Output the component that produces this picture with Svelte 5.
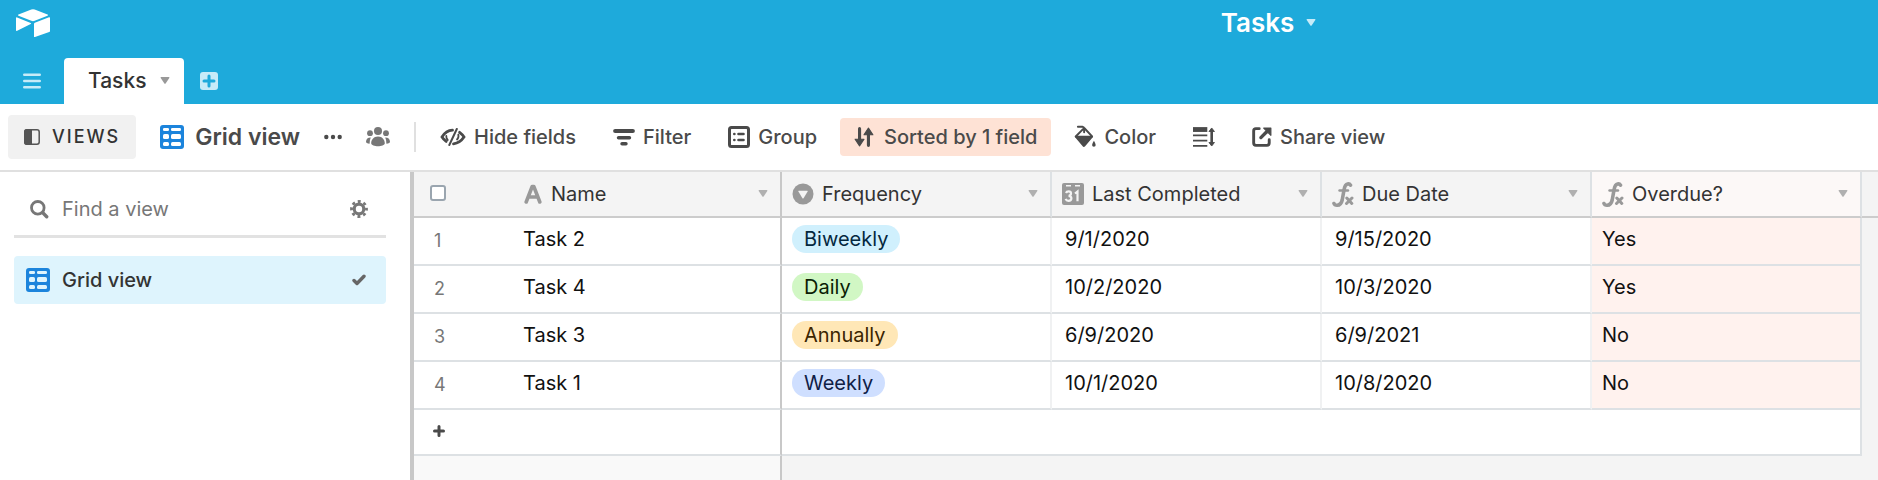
<script>
  let tableName = $state('Tasks');
  let viewSearch = $state('');
  let allSelected = $state(false);

  const views = [{ name: 'Grid view', active: true }];

  const columns = [
    { name: 'Name', icon: 'text', key: 'name' },
    { name: 'Frequency', icon: 'select', key: 'frequency' },
    { name: 'Last Completed', icon: 'date', key: 'last' },
    { name: 'Due Date', icon: 'formula', key: 'due' },
    { name: 'Overdue?', icon: 'formula', key: 'overdue' }
  ];

  const tasks = [
    { name: 'Task 2', frequency: 'Biweekly', last: '9/1/2020', due: '9/15/2020', overdue: 'Yes' },
    { name: 'Task 4', frequency: 'Daily', last: '10/2/2020', due: '10/3/2020', overdue: 'Yes' },
    { name: 'Task 3', frequency: 'Annually', last: '6/9/2020', due: '6/9/2021', overdue: 'No' },
    { name: 'Task 1', frequency: 'Weekly', last: '10/1/2020', due: '10/8/2020', overdue: 'No' }
  ];

  const filteredViews = $derived(
    views.filter(v => v.name.toLowerCase().includes(viewSearch.toLowerCase()))
  );
</script>

{#snippet caret()}
  <svg class="caret" width="10" height="8" viewBox="0 0 10 8"><path d="M1.2 0h7.6q1 0 .5 1L5.8 6.3q-.8 1-1.6 0L.7 1Q.2 0 1.2 0z" fill="currentColor" /></svg>
{/snippet}

{#snippet gridIcon(gap)}
  <svg width="24" height="24" viewBox="0 0 24 24">
    <rect width="24" height="24" rx="3" fill="#1c84dc" />
    <g fill={gap}>
      <rect x="3" y="3" width="6" height="3" rx="1.3" /><rect x="11" y="3" width="10" height="3" rx="1.3" />
      <rect x="3" y="9" width="6" height="5" rx="1.6" /><rect x="11" y="9" width="10" height="5" rx="1.6" />
      <rect x="3" y="17" width="6" height="4" rx="1.5" /><rect x="11" y="17" width="10" height="4" rx="1.5" />
    </g>
  </svg>
{/snippet}

{#snippet fieldIcon(type)}
  {#if type === 'text'}
    <svg width="19" height="20" viewBox="0 0 19 20" fill="none" stroke="currentColor" stroke-width="3.6" stroke-linecap="round" stroke-linejoin="round"><path d="M2.200 18 8.200 2.500h1.600L15.800 18M4.700 13h8.800" /></svg>
  {:else if type === 'select'}
    <svg width="22" height="22" viewBox="0 0 22 22"><circle cx="11" cy="11" r="10.5" fill="currentColor" /><path d="M6.8 7.8h8.4q.8 0 .4.8l-3.9 6.5q-.7 1-1.4 0L6.4 8.6q-.4-.8.4-.8z" fill="#f4f4f4" /></svg>
  {:else if type === 'date'}
    <svg width="22" height="22" viewBox="0 0 22 22">
      <rect width="22" height="22" rx="2" fill="currentColor" />
      <path d="M4 2.8h5M13 2.8h5" stroke="#f4f4f4" stroke-width="1.6" />
      <path d="M4 10q.6-1.6 2.6-1.6 2.4 0 2.4 2.2 0 2-2.4 2.2 2.8.2 2.8 2.5 0 2.5-2.9 2.5-2.2 0-2.9-1.9M13 10.5l2.5-2v9.7" fill="none" stroke="#f4f4f4" stroke-width="2.2" />
    </svg>
  {:else}
    <svg width="22" height="25" viewBox="0 0 22 25" fill="none" stroke="currentColor" stroke-linecap="round">
      <path d="M18.500 3.200Q17.500 1.500 15.500 2 13 2.500 12.200 7L10.200 18Q9 23.300 5 23.200 2.600 23.200 2 21.500" stroke-width="3.600" />
      <path d="M7.500 8.500h8.500" stroke-width="2.400" />
      <path d="m14.800 16 5 5.500M20 16l-5.500 5.500" stroke-width="3" />
    </svg>
  {/if}
{/snippet}

<div class="app">
  <header>
    <div class="title-bar">
      <a class="logo" href="#home" aria-label="Home">
        <svg width="34" height="28" viewBox="0 0 34 28" fill="#fff">
          <path d="M15.300.500Q17 -.2 18.700.5L31.500 5.500q1.200.6 0 1.200L18.700 11.800q-1.700.7-3.400 0L2.500 6.700q-1.200-.6 0-1.200z" />
          <path d="M18 14.900q0-.8.800-1.100L33 8.300q1-.3 1 .6v13q0 .9-.8 1.200L19 28q-1 .3-1-.6z" />
          <path d="M0 9.300q0-1.300 1.100-.9l13.600 5.500q1 .5 0 1L1.200 21.700Q0 22.300 0 21z" />
        </svg>
      </a>
      <button class="base-name">{tableName} {@render caret()}</button>
    </div>
    <nav class="tabs">
      <button class="menu" aria-label="All tables">
        <svg width="18" height="16" viewBox="0 0 18 16" stroke="currentColor" stroke-width="2.600" stroke-linecap="round"><path d="M1.300 1.800h15.400M1.300 8h15.400M1.300 14.200h15.400" /></svg>
      </button>
      <button class="tab">{tableName} {@render caret()}</button>
      <button class="add-table" aria-label="Add table">
        <svg width="18" height="18" viewBox="0 0 18 18"><rect width="18" height="18" rx="3" fill="#c7ebf8" /><path d="M9 4v10M4 9h10" stroke="#1eaadb" stroke-width="3" stroke-linecap="round" /></svg>
      </button>
    </nav>
  </header>

  <div class="toolbar">
    <button class="views-toggle">
      <svg width="16" height="16" viewBox="0 0 16 16"><rect x=".8" y=".8" width="14.400" height="14.400" rx="2.200" fill="none" stroke="#555" stroke-width="1.500" /><path d="M3 0h5v16H3q-3 0-3-3V3q0-3 3-3z" fill="#555" /></svg>
      <span>VIEWS</span>
    </button>
    <button class="view-name">{@render gridIcon('#fff')} Grid view</button>
    <button class="plain" aria-label="View options">
      <svg width="18" height="6" viewBox="0 0 18 6" fill="#4a4a4a"><circle cx="2.300" cy="3" r="2.200" /><circle cx="9" cy="3" r="2.200" /><circle cx="15.700" cy="3" r="2.200" /></svg>
    </button>
    <button class="plain" aria-label="Collaborators">
      <svg width="24" height="20" viewBox="0 0 24 20" fill="#777"><circle cx="12" cy="4" r="4" /><circle cx="4" cy="6.200" r="2.900" /><circle cx="20" cy="6.200" r="2.900" /><path d="M12 9.500c4.500 0 6.800 3.500 6.800 6.700 0 2-3.600 3-6.800 3s-6.800-1-6.800-3c0-3.200 2.300-6.700 6.800-6.700zM4.800 10.500Q3.500 13 3.600 16.800 0 16.500 0 14.800q.2-4.300 4.800-4.300zM19.200 10.500q1.300 2.500 1.200 6.300 3.600-.3 3.600-2-.2-4.300-4.800-4.300z" /></svg>
    </button>
    <div class="divider"></div>
    <div class="tools">
      <button class="tool">
        <svg width="26" height="18" viewBox="0 0 26 18" fill="none" stroke="currentColor" stroke-width="2.800" stroke-linecap="round"><path d="M12.500 2.200Q6 2.500 2 9q1.500 2.400 4.200 4.500" /><path d="M19.600 4.300Q22.300 6.300 24 9q-4 6-10.500 6.800" /><path d="m16.800 1-7.500 16" stroke-width="2" /><path d="M6.300 8q-.2 2.400 1.400 4M18.300 6.500q.8 3-1.300 5" stroke-width="1.800" /></svg>
        Hide fields
      </button>
      <button class="tool">
        <svg width="22" height="18" viewBox="0 0 22 18" stroke="currentColor" stroke-linecap="round"><path d="M2.200 3h17.600" stroke-width="4.200" /><path d="M5.500 9.700h11" stroke-width="3.400" /><path d="M9 15.800h4" stroke-width="3.400" /></svg>
        Filter
      </button>
      <button class="tool">
        <svg width="22" height="22" viewBox="0 0 22 22" fill="none" stroke="currentColor"><rect x="1.500" y="1.500" width="19" height="19" rx="2" stroke-width="3" /><path d="M6.300 8h.1M6.300 14h.1M10.500 8h5M10.500 14h5" stroke-width="2.600" stroke-linecap="round" /></svg>
        Group
      </button>
      <button class="tool sorted">
        <svg width="20" height="20" viewBox="0 0 18 18"><path d="M5 1.500V12M13 16.500V6" stroke="currentColor" stroke-width="2.800" stroke-linecap="round" /><path d="M1 11h8L5 17zM9 7h8l-4-6z" fill="currentColor" stroke="currentColor" stroke-linejoin="round" /></svg>
        Sorted by 1 field
      </button>
      <button class="tool">
        <svg width="22" height="24" viewBox="0 0 20 22" fill="none" stroke="currentColor" stroke-linejoin="round"><path d="M1.500 10.700h15l-7 8.300q-.6.600-1 0z" fill="currentColor" stroke-width="1.600" /><path d="M1.500 10.500 7.500 4.500l2-1.500 7 7.500" stroke-width="1.800" stroke-linecap="round" /><path d="M3.500 1.600h4.200q1.500.2 1.500 2v3" stroke-width="1.800" stroke-linecap="round" /><path d="M18.200 14.500q1.600 2.700 1.600 3.800a1.600 1.600 0 0 1-3.300 0q0-1.100 1.700-3.800z" fill="currentColor" stroke="none" /></svg>
        Color
      </button>
      <button class="tool" aria-label="Row height">
        <svg width="22" height="20" viewBox="0 0 20 18" stroke="currentColor"><path d="M0 2.200h13" stroke-width="4.400" /><path d="M0 7.500h13M0 12.200h13M0 17h13" stroke-width="1.600" /><path d="M17 3v12" stroke-width="2.400" /><path d="M14.500 4h5L17 .8zM14.500 14h5L17 17.200z" fill="currentColor" stroke-linejoin="round" stroke-width=".8" /></svg>
      </button>
      <button class="tool">
        <svg width="20" height="20" viewBox="0 0 18 18" fill="none" stroke="currentColor" stroke-width="2.600" stroke-linecap="round" stroke-linejoin="round"><path d="M6.500 1.500H3.500q-2 0-2 2v11q0 2 2 2h10q2 0 2-2v-3" /><path d="m8 9.500 5-5" stroke-width="3" /><path d="M10.500 1H17v6.500z" fill="currentColor" stroke-width="1" /></svg>
        Share view
      </button>
    </div>
  </div>

  <main>
    <aside>
      <div class="find">
        <label for="find-view" aria-label="Find a view">
          <svg width="19" height="19" viewBox="0 0 19 19" fill="none" stroke="#777"><circle cx="7.800" cy="7.800" r="6.300" stroke-width="2.800" /><path d="m12.800 12.800 3.900 3.900" stroke-width="3.400" stroke-linecap="round" /></svg>
        </label>
        <input id="find-view" type="text" placeholder="Find a view" bind:value={viewSearch} />
        <button class="plain" aria-label="View settings">
          <svg width="18" height="18" viewBox="0 0 18 18" fill="none" stroke="#777"><circle cx="9" cy="9" r="4.800" stroke-width="3.200" /><circle cx="9" cy="9" r="7.500" stroke-width="2.800" stroke-dasharray="2.945 2.945" stroke-dashoffset="1.470" /></svg>
        </button>
      </div>
      {#each filteredViews as view}
        <button class="view-item" class:active={view.active}>
          {@render gridIcon('#def4fd')}
          <span>{view.name}</span>
          <svg width="14" height="12" viewBox="0 0 14 12" fill="none" stroke="#666" stroke-width="3.400" stroke-linecap="round" stroke-linejoin="round"><path d="m2 6.500 3 3 7-7.200" /></svg>
        </button>
      {/each}
    </aside>

    <section class="grid">
      <table>
        <colgroup>
          <col class="col-number" />
          {#each columns as column}
            <col class="col-field" />
          {/each}
          <col />
        </colgroup>
        <thead>
          <tr>
            <th class="number"><input type="checkbox" aria-label="Select all rows" bind:checked={allSelected} /></th>
            {#each columns as column}
              <th class={column.key}>
                <div class="field">
                  {@render fieldIcon(column.icon)}
                  <span>{column.name}</span>
                  <button class="plain" aria-label="{column.name} options">{@render caret()}</button>
                </div>
              </th>
            {/each}
            <th class="rest"></th>
          </tr>
        </thead>
        <tbody>
          {#each tasks as task, i}
            <tr>
              <td class="number">{i + 1}</td>
              <td class="name">{task.name}</td>
              <td class="frequency"><span class="pill {task.frequency.toLowerCase()}">{task.frequency}</span></td>
              <td class="date">{task.last}</td>
              <td class="date">{task.due}</td>
              <td class="overdue">{task.overdue}</td>
              <td class="rest"></td>
            </tr>
          {/each}
          <tr class="add-row">
            <td class="name" colspan="2">
              <button class="plain" aria-label="Add record">
                <svg width="12" height="12" viewBox="0 0 12 12" stroke="#4a4a4a" stroke-width="3" stroke-linecap="round"><path d="M6 1.500v9M1.500 6h9" /></svg>
              </button>
            </td>
            <td class="last-cell" colspan="4"></td>
            <td class="rest"></td>
          </tr>
        </tbody>
      </table>
      <div class="below"><div class="below-left"></div></div>
    </section>
  </main>
</div>

<style>
  :global(body) {
    margin: 0;
  }

  .app {
    display: flex;
    flex-direction: column;
    min-height: 100vh;
    background: #fff;
    color: #333;
    font-family: Inter, 'Liberation Sans', sans-serif;
    font-size: 20px;
    line-height: 24px;
  }

  .app * {
    box-sizing: border-box;
  }

  svg {
    display: block;
    flex: none;
  }

  button {
    display: flex;
    align-items: center;
    padding: 0;
    border: 0;
    background: none;
    color: inherit;
    font: inherit;
    white-space: nowrap;
    cursor: pointer;
  }

  header {
    background: #1eaadb;
  }

  .title-bar {
    display: flex;
    align-items: center;
    height: 45px;
    margin-bottom: 13px;
  }

  .logo {
    width: 65%;
    padding-left: 16px;
  }

  .base-name {
    gap: 12px;
    color: #fff;
    font-size: 26px;
    font-weight: 600;
  }

  .base-name .caret {
    color: #c7ebf8;
  }

  .tabs {
    display: flex;
    align-items: center;
  }

  .menu {
    padding: 0 23px;
    color: #c7ebf8;
  }

  .tab {
    gap: 14px;
    height: 46px;
    padding: 0 14px 0 24px;
    border-radius: 4px 4px 0 0;
    background: #fff;
    font-size: 21px;
    font-weight: 500;
  }

  .caret {
    color: #999;
  }

  .add-table {
    padding: 0 16px;
  }

  .toolbar {
    display: flex;
    align-items: center;
    height: 68px;
    padding: 0 8px;
    border-bottom: 2px solid #e0e0e0;
    color: #4a4a4a;
    font-weight: 500;
  }

  .views-toggle {
    gap: 12px;
    height: 44px;
    padding: 0 16px;
    border-radius: 4px;
    background: #f1f1f1;
    color: #333;
    font-size: 18px;
    letter-spacing: 2px;
  }

  .view-name {
    gap: 11px;
    margin: 0 24px;
    font-size: 23px;
    font-weight: 600;
  }

  .toolbar .plain {
    margin-right: 24px;
  }

  .divider {
    width: 2px;
    height: 30px;
    background: #e0e0e0;
  }

  .tools {
    display: flex;
    align-items: center;
    gap: 9px;
    margin-left: 10px;
  }

  .tool {
    gap: 8px;
    height: 38px;
    padding: 0 14px;
    border-radius: 4px;
  }

  .sorted {
    gap: 10px;
    background: #fee2d5;
  }

  main {
    display: flex;
    flex: 1;
  }

  aside {
    flex: none;
    width: 414px;
    padding: 11px 24px 0 14px;
    border-right: 4px solid #c8c8c8;
  }

  .find {
    display: flex;
    align-items: center;
    gap: 13px;
    height: 55px;
    margin-bottom: 18px;
    padding: 0 18px 0 16px;
    border-bottom: 3px solid #e2e2e2;
  }

  .find input {
    flex: 1;
    min-width: 0;
    padding: 0;
    border: 0;
    outline: 0;
    background: none;
    color: #333;
    font: inherit;
  }

  .find input::placeholder {
    color: #777;
    opacity: 1;
  }

  .view-item {
    gap: 12px;
    width: 100%;
    height: 48px;
    padding: 0 20px 0 12px;
    border-radius: 4px;
    font-weight: 500;
    text-align: left;
  }

  .view-item.active {
    background: #def4fd;
  }

  .view-item span {
    flex: 1;
  }

  .grid {
    display: flex;
    flex: 1;
    flex-direction: column;
    min-width: 0;
  }

  table {
    width: 100%;
    border-collapse: separate;
    border-spacing: 0;
    table-layout: fixed;
  }

  .col-number {
    width: 98px;
  }

  .col-field {
    width: 270px;
  }

  th {
    height: 46px;
    padding: 0 12px 0 10px;
    border-right: 2px solid #dde1e4;
    border-bottom: 2px solid #ccc;
    background: #f4f4f4;
    font-weight: 400;
    text-align: left;
  }

  td {
    height: 48px;
    padding: 0 10px 4px;
    border-right: 2px solid #f0f1f2;
    border-bottom: 2px solid #dde1e4;
    color: #111;
  }

  .field {
    display: flex;
    align-items: center;
    gap: 8px;
    color: #999;
  }

  .field span {
    flex: 1;
    color: #333;
    white-space: nowrap;
  }

  th.name {
    padding-left: 12px;
  }

  .field .caret {
    color: #b0b0b0;
  }

  th.overdue {
    background: #fcf8f7;
  }

  .name {
    border-right-color: #c8c8c8;
  }

  td.name {
    padding-left: 11px;
  }

  .number {
    padding: 0 0 0 16px;
    border-right: 0;
  }

  th.number {
    padding-bottom: 2px;
  }

  td.number {
    padding: 0 0 0 20px;
    color: #777;
    font-size: 18px;
  }

  .number input {
    display: block;
    appearance: none;
    width: 16px;
    height: 16px;
    margin: 0;
    border: 2px solid #9aa5af;
    border-radius: 3px;
    background: #fff;
  }

  td.date {
    padding-left: 13px;
  }

  td.overdue {
    border-right-color: #dde1e4;
    background: #fff2ee;
  }

  .rest,
  td.rest {
    border-right: 0;
    background: #f4f4f4;
  }

  td.rest {
    border-bottom: 0;
  }

  .pill {
    display: inline-block;
    padding: 2px 12px;
    border-radius: 14px;
    vertical-align: middle;
  }

  .biweekly {
    background: #d0f0fd;
    color: #04283f;
  }

  .daily {
    background: #d1f7c4;
    color: #0b1d05;
  }

  .annually {
    background: #ffe7b6;
    color: #3b2501;
  }

  .weekly {
    background: #cfdfff;
    color: #102046;
  }

  .add-row td {
    height: 46px;
  }

  .add-row .name {
    padding: 0 0 2px 19px;
  }

  .last-cell {
    border-right-color: #dde1e4;
  }

  .below {
    flex: 1;
    display: flex;
    min-height: 24px;
    background: #f4f4f4;
  }

  .below-left {
    width: 368px;
    border-right: 2px solid #c8c8c8;
    background: #f9f9f9;
  }
</style>
